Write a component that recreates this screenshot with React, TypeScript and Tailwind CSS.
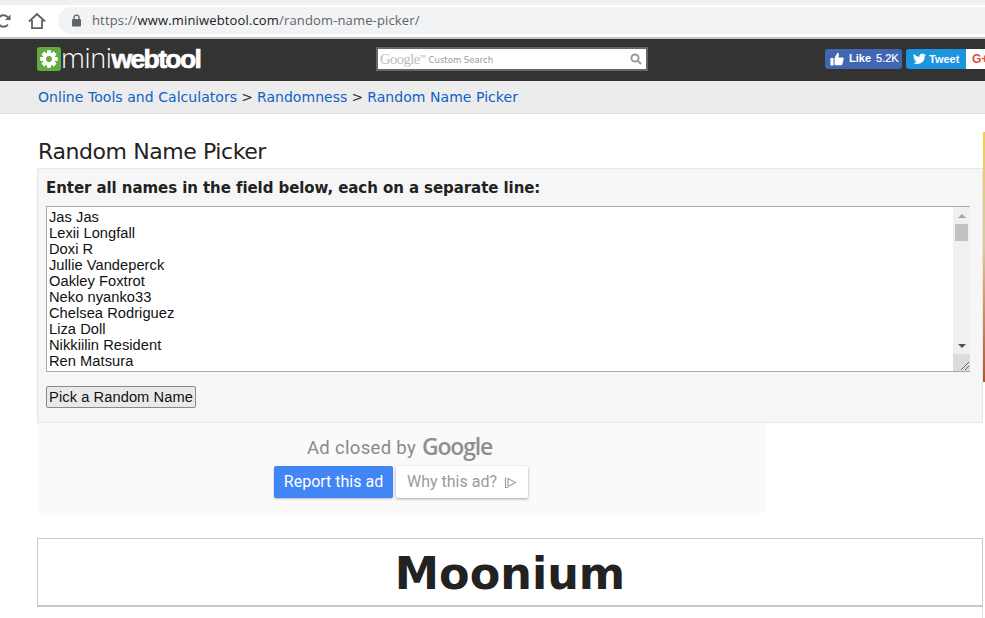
import React from "react";

const names = ["Jas Jas","Lexii Longfall","Doxi R","Jullie Vandeperck","Oakley Foxtrot","Neko nyanko33","Chelsea Rodriguez","Liza Doll","Nikkiilin Resident","Ren Matsura"];

function Gear() {
  const teeth = [0,45,90,135,180,225,270,315];
  return (
    <svg width="24" height="24" viewBox="0 0 24 24" className="shrink-0 mt-[-2px]">
      <rect width="24" height="24" rx="3" fill="#62ab3c" />
      <g fill="#fff">
        {teeth.map((a) => <rect key={a} x="10" y="3.5" width="4" height="17" transform={`rotate(${a} 12 12)`} />)}
        <circle cx="12" cy="12" r="6.4" />
      </g>
      <circle cx="12" cy="12" r="3" fill="#62ab3c" />
    </svg>
  );
}

export default function App() {
  return (
    <div className="w-[985px] h-[618px] overflow-hidden bg-white relative font-['DejaVu_Sans',sans-serif]">
      {/* browser toolbar */}
      <div className="h-[39px] bg-white border-t-[5px] border-b-2 border-t-[#eef0f2] border-b-[#c4c4c4] flex items-center">
        <svg width="12" height="18" viewBox="0 0 12 18" className="shrink-0 mt-[-1px]" fill="none">
          <path d="M7.900 5.300A5.700 5.700 0 1 0 7.900 12.700" stroke="#5f6368" strokeWidth="2" />
          <path d="M10.500 2.500V8H5z" fill="#5f6368" />
        </svg>
        <svg width="18" height="18" viewBox="0 0 18 18" className="ml-[16px] shrink-0 mt-[-1px]" fill="none" stroke="#5f6368" strokeWidth="1.8">
          <path d="M1 9.500 9 2l8 7.500M4 8v8.200h10V8" />
        </svg>
        <div className="ml-[12px] flex-1 h-[27px] mt-[-1px] bg-[#f1f3f4] rounded-l-[14px] flex items-center pl-[13px]">
          <svg width="11" height="13" viewBox="0 0 11 13" className="shrink-0">
            <path d="M3 5.500V3.600a2.500 2.500 0 0 1 5 0v1.900" fill="none" stroke="#5f6368" strokeWidth="1.3" />
            <rect x="1" y="5" width="9" height="7.500" rx="1" fill="#5f6368" />
          </svg>
          <span className="ml-[10px] text-[13px] tracking-[0.15px] text-[#5f6368] font-['Open_Sans',sans-serif]">
            https://<span className="text-[#202124]">www.miniwebtool.com</span>/random-name-picker/
          </span>
        </div>
      </div>

      {/* site header */}
      <div className="h-[42px] bg-[#333333] flex items-center pl-[37px] overflow-hidden">
        <Gear />
        <div className="w-[315px] shrink-0 text-white text-[27px] leading-none mt-[-4px] whitespace-nowrap">
          <span className="font-['Open_Sans',sans-serif] font-light tracking-[-0.4px]">mini</span>
          <span className="font-['Liberation_Sans',sans-serif] font-bold text-[26.5px] tracking-[-1.6px] [-webkit-text-stroke:0.7px_white]">webtool</span>
        </div>
        <div className="w-[272px] h-[24px] shrink-0 bg-white border-2 border-[#666666] flex items-center pl-[2px] pr-[4px] mt-[-2px]">
          <span className="font-['Liberation_Serif',serif] text-[14.5px] tracking-[-0.5px] text-[#bbbbbb] mt-[1px]">Google</span>
          <span className="text-[4px] text-[#bbbbbb] self-start mt-[5px]">TM</span>
          <span className="ml-[3px] mt-[3px] text-[8.5px] text-[#999999] font-['DejaVu_Sans',sans-serif]">Custom Search</span>
          <svg width="12" height="12" viewBox="0 0 12 12" className="ml-auto shrink-0" fill="none" stroke="#999999" strokeWidth="2">
            <circle cx="5" cy="5" r="3.600" />
            <path d="M7.600 7.600 11 11" />
          </svg>
        </div>
        <div className="ml-[177px] shrink-0 w-[77px] h-[20px] mt-[-3px] rounded-[3px] bg-[#4267b2] flex items-center pl-[5px] text-white text-[11px] font-bold font-['Liberation_Sans',sans-serif]">
          <svg width="14" height="14" viewBox="0 0 14 14" fill="#fff" className="shrink-0">
            <path d="M0.500 6h3v7.500h-3zM4.500 13V6.200L7.200 1c1.300-.2 2 .6 1.700 1.900L8.400 5.400h4c1 0 1.400.7 1.200 1.500l-1.200 5.300c-.2.8-.7 1-1.400 1H6c-.7 0-1.100-.2-1.500-.7z" />
          </svg>
          <span className="ml-[5px]">Like</span>
          <span className="ml-[5px] font-normal [-webkit-text-stroke:0.2px_white]">5.2K</span>
        </div>
        <div className="ml-[4px] shrink-0 w-[60px] h-[20px] mt-[-2px] rounded-l-[3px] bg-[#1b95e0] flex items-center pl-[7px] text-white text-[11px] font-bold font-['Liberation_Sans',sans-serif]">
          <svg width="13" height="12" viewBox="0 0 24 20" fill="#fff" className="shrink-0">
            <path d="M24 2.400a9.800 9.800 0 0 1-2.800.8A4.900 4.900 0 0 0 23.300.5a9.800 9.800 0 0 1-3.100 1.200A4.900 4.900 0 0 0 11.800 6.100 13.900 13.900 0 0 1 1.700.9a4.900 4.900 0 0 0 1.500 6.500A4.900 4.900 0 0 1 1 6.800a4.900 4.900 0 0 0 3.900 4.800 4.900 4.900 0 0 1-2.200.1 4.900 4.900 0 0 0 4.600 3.400A9.900 9.900 0 0 1 0 17.100 13.900 13.900 0 0 0 21.500 4.700 9.900 9.900 0 0 0 24 2.400z" />
          </svg>
          <span className="ml-[3px]">Tweet</span>
        </div>
        <div className="shrink-0 w-[40px] h-[20px] mt-[-2px] bg-white flex items-center pl-[6px] text-[#dc4e41] text-[12px] font-bold font-['Liberation_Sans',sans-serif]">G+</div>
      </div>

      {/* breadcrumb */}
      <div className="h-[33px] bg-[#ececec] border-b border-[#e2e2e2] pl-[38px] flex items-center text-[14px] tracking-[0.05px] text-[#333333] whitespace-nowrap">
        <span className="text-[#0d62c9]">Online Tools and Calculators</span>
        <span className="mx-[4px]">&gt;</span>
        <span className="text-[#0d62c9]">Randomness</span>
        <span className="mx-[4px]">&gt;</span>
        <span className="text-[#0d62c9]">Random Name Picker</span>
      </div>

      {/* content */}
      <div className="ml-[37px] w-[946px]">
        <h1 className="mt-[23px] h-[30px] text-[22px] leading-[30px] pl-[1px] text-[#222222] font-normal font-['DejaVu_Sans',sans-serif] tracking-[-0.42px]">Random Name Picker</h1>
        <div className="mt-[1px] h-[255px] bg-[#f6f6f6] border border-[#e6e6e6] pl-[8px] pt-[10px]">
          <p className="text-[15px] leading-[18px] font-bold tracking-[-0.07px] text-[#222222]">Enter all names in the field below, each on a separate line:</p>
          <div className="mt-[9px] w-[924px] h-[166px] bg-white border border-r-0 border-[#a9a9a9] flex">
            <div className="flex-1 pl-[2px] pt-[2px] text-[14.67px] leading-[16px] tracking-[0.04px] text-[#111111] font-['Liberation_Sans',sans-serif]">
              {names.map((n) => <div key={n}>{n}</div>)}
            </div>
            <div className="w-[17px] bg-[#f0f0f0] flex flex-col">
              <div className="h-[17px] flex items-center justify-center">
                <div className="w-0 h-0 border-x-[4px] border-x-transparent border-b-[4px] border-b-[#a3a3a3]" />
              </div>
              <div className="mx-[2px] h-[17px] bg-[#c1c1c1]" />
              <div className="flex-1" />
              <div className="h-[17px] flex items-center justify-center">
                <div className="w-0 h-0 border-x-[4px] border-x-transparent border-t-[4px] border-t-[#505050]" />
              </div>
              <div className="h-[17px] bg-[#dcdcdc] flex items-end justify-end">
                <svg width="10" height="10" viewBox="0 0 10 10" stroke="#666666" strokeWidth="1" fill="none">
                  <path d="M1 9 9 1M5 9l4-4" />
                </svg>
              </div>
            </div>
          </div>
          <button className="mt-[14px] w-[150px] h-[22px] bg-[#e9e9e9] border border-[#8a8a8a] rounded-[2px] text-[14.67px] leading-[20px] tracking-[0.07px] text-[#111111] font-['Liberation_Sans',sans-serif] p-0 block">Pick a Random Name</button>
        </div>

        {/* closed ad */}
        <div className="w-[728px] h-[90px] bg-[#fafafa] flex flex-col items-center">
          <div className="mt-[11px] h-[29px] ml-[-3px] flex items-center text-[#8a8a8a] font-['Roboto',sans-serif]">
            <span className="text-[18.5px] tracking-[0.32px]">Ad closed by</span>
            <span className="ml-[6px] text-[23px] font-semibold text-[#8f8f8f] font-['Open_Sans',sans-serif] tracking-[-1.2px] mt-[-4px]">Google</span>
          </div>
          <div className="mt-[3px] flex gap-[3px] font-['Roboto',sans-serif] text-[16px]">
            <div className="w-[119px] h-[32px] bg-[#4285f4] rounded-[2px] text-white flex items-center justify-center shadow-[0_1px_2px_rgba(0,0,0,0.25)]">Report this ad</div>
            <div className="w-[132px] h-[32px] bg-white rounded-[2px] text-[#9a9a9a] flex items-center justify-center shadow-[0_1px_3px_rgba(0,0,0,0.35)]">
              Why this ad?
              <svg width="13" height="13" viewBox="0 0 13 13" fill="none" stroke="#9a9a9a" strokeWidth="1.1" className="ml-[7px]">
                <path d="M1.500 1.500v10h2.500M4 10V2.500l7.500 4-7.500 4" />
              </svg>
            </div>
          </div>
        </div>

        {/* result */}
        <div className="mt-[25px] h-[69px] border border-b-2 border-[#c8c8c8] flex items-center justify-center">
          <span className="text-[44.5px] leading-none font-bold text-[#222222] pt-[5px]">Moonium</span>
        </div>
        <div className="h-[12px] border-r border-[#dddddd] bg-white" />
      </div>

      {/* edge of a side ad, peeking in at the window border */}
      <div className="absolute left-[983px] top-[132px] w-[2px] h-[250px] bg-gradient-to-b from-[#f0d040] via-[#dcc8a8] via-45% to-[#b0552a]" />
    </div>
  );
}
